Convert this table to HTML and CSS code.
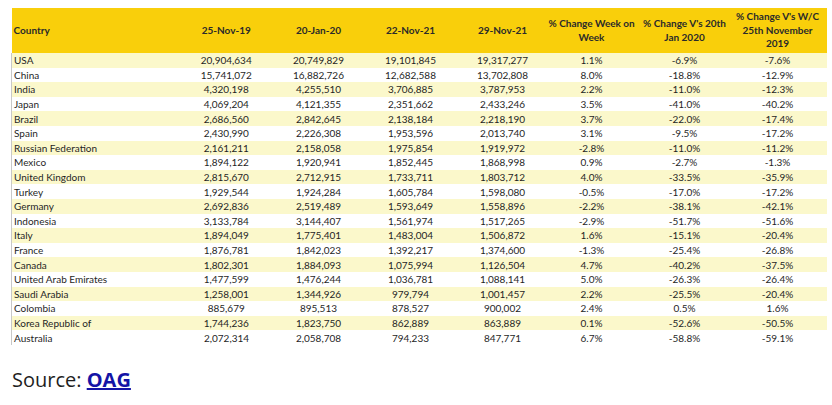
FILE: index.html
```html
<!DOCTYPE html>
<html>
<head>
<meta charset="utf-8">
<link rel="stylesheet" href="styles.css">
</head>
<body>
<table class="data">
  <colgroup>
    <col class="c-country"><col class="c-num"><col class="c-num"><col class="c-num"><col class="c-num"><col class="c-wk"><col class="c-jan"><col class="c-nov">
  </colgroup>
  <thead>
    <tr>
      <th class="left">Country</th>
      <th>25-Nov-19</th>
      <th>20-Jan-20</th>
      <th>22-Nov-21</th>
      <th>29-Nov-21</th>
      <th>% Change Week on<br>Week</th>
      <th>% Change V's 20th<br>Jan 2020</th>
      <th class="last">% Change V's W/C<br>25th November<br>2019</th>
    </tr>
  </thead>
  <tbody>
    <tr><td class="left">USA</td><td>20,904,634</td><td>20,749,829</td><td>19,101,845</td><td>19,317,277</td><td>1.1%</td><td>-6.9%</td><td class="last">-7.6%</td></tr>
    <tr><td class="left">China</td><td>15,741,072</td><td>16,882,726</td><td>12,682,588</td><td>13,702,808</td><td>8.0%</td><td>-18.8%</td><td class="last">-12.9%</td></tr>
    <tr><td class="left">India</td><td>4,320,198</td><td>4,255,510</td><td>3,706,885</td><td>3,787,953</td><td>2.2%</td><td>-11.0%</td><td class="last">-12.3%</td></tr>
    <tr><td class="left">Japan</td><td>4,069,204</td><td>4,121,355</td><td>2,351,662</td><td>2,433,246</td><td>3.5%</td><td>-41.0%</td><td class="last">-40.2%</td></tr>
    <tr><td class="left">Brazil</td><td>2,686,560</td><td>2,842,645</td><td>2,138,184</td><td>2,218,190</td><td>3.7%</td><td>-22.0%</td><td class="last">-17.4%</td></tr>
    <tr><td class="left">Spain</td><td>2,430,990</td><td>2,226,308</td><td>1,953,596</td><td>2,013,740</td><td>3.1%</td><td>-9.5%</td><td class="last">-17.2%</td></tr>
    <tr><td class="left">Russian Federation</td><td>2,161,211</td><td>2,158,058</td><td>1,975,854</td><td>1,919,972</td><td>-2.8%</td><td>-11.0%</td><td class="last">-11.2%</td></tr>
    <tr><td class="left">Mexico</td><td>1,894,122</td><td>1,920,941</td><td>1,852,445</td><td>1,868,998</td><td>0.9%</td><td>-2.7%</td><td class="last">-1.3%</td></tr>
    <tr><td class="left">United Kingdom</td><td>2,815,670</td><td>2,712,915</td><td>1,733,711</td><td>1,803,712</td><td>4.0%</td><td>-33.5%</td><td class="last">-35.9%</td></tr>
    <tr><td class="left">Turkey</td><td>1,929,544</td><td>1,924,284</td><td>1,605,784</td><td>1,598,080</td><td>-0.5%</td><td>-17.0%</td><td class="last">-17.2%</td></tr>
    <tr><td class="left">Germany</td><td>2,692,836</td><td>2,519,489</td><td>1,593,649</td><td>1,558,896</td><td>-2.2%</td><td>-38.1%</td><td class="last">-42.1%</td></tr>
    <tr><td class="left">Indonesia</td><td>3,133,784</td><td>3,144,407</td><td>1,561,974</td><td>1,517,265</td><td>-2.9%</td><td>-51.7%</td><td class="last">-51.6%</td></tr>
    <tr><td class="left">Italy</td><td>1,894,049</td><td>1,775,401</td><td>1,483,004</td><td>1,506,872</td><td>1.6%</td><td>-15.1%</td><td class="last">-20.4%</td></tr>
    <tr><td class="left">France</td><td>1,876,781</td><td>1,842,023</td><td>1,392,217</td><td>1,374,600</td><td>-1.3%</td><td>-25.4%</td><td class="last">-26.8%</td></tr>
    <tr><td class="left">Canada</td><td>1,802,301</td><td>1,884,093</td><td>1,075,994</td><td>1,126,504</td><td>4.7%</td><td>-40.2%</td><td class="last">-37.5%</td></tr>
    <tr><td class="left">United Arab Emirates</td><td>1,477,599</td><td>1,476,244</td><td>1,036,781</td><td>1,088,141</td><td>5.0%</td><td>-26.3%</td><td class="last">-26.4%</td></tr>
    <tr><td class="left">Saudi Arabia</td><td>1,258,001</td><td>1,344,926</td><td>979,794</td><td>1,001,457</td><td>2.2%</td><td>-25.5%</td><td class="last">-20.4%</td></tr>
    <tr><td class="left">Colombia</td><td>885,679</td><td>895,513</td><td>878,527</td><td>900,002</td><td>2.4%</td><td>0.5%</td><td class="last">1.6%</td></tr>
    <tr><td class="left">Korea Republic of</td><td>1,744,236</td><td>1,823,750</td><td>862,889</td><td>863,889</td><td>0.1%</td><td>-52.6%</td><td class="last">-50.5%</td></tr>
    <tr><td class="left">Australia</td><td>2,072,314</td><td>2,058,708</td><td>794,233</td><td>847,771</td><td>6.7%</td><td>-58.8%</td><td class="last">-59.1%</td></tr>
  </tbody>
</table>
<p class="source">Source: <a class="source-link" href="#">OAG</a></p>
</body>
</html>
```

FILE: styles.css
```css
html, body {
  margin: 0;
  padding: 0;
  background: #ffffff;
}

body {
  padding: 8px 0 0 11px;
  font-family: Lato, "Liberation Sans", sans-serif;
  color: #222222;
}

.data {
  border-collapse: collapse;
  table-layout: fixed;
  width: 815px;
  font-size: 10px;
}

.c-country { width: 169px; }
.c-num { width: 92px; }
.c-wk { width: 86px; }
.c-jan { width: 100px; }
.c-nov { width: 92px; }

.data thead tr {
  height: 45px;
  background: #f9cf0b;
}

.data th {
  font-weight: 700;
  font-size: 10px;
  line-height: 13.5px;
  text-align: center;
  vertical-align: middle;
  padding: 0;
  white-space: nowrap;
  color: #2a2a2a;
}

.data th.left {
  text-align: left;
  padding-left: 2px;
}

.data th.last,
.data td.last {
  padding-right: 6px;
}

.data tbody tr {
  height: 14.6px;
}

.data tbody tr:nth-child(odd) {
  background: #fbf8cb;
}

.data td {
  padding: 0;
  line-height: 14px;
  text-align: center;
  white-space: nowrap;
  color: #1f1f1f;
}

.data td.left {
  text-align: left;
  padding-left: 2px;
  border-left: 1px solid #c8c8c8;
}

.source {
  margin: 22px 0 0 1px;
  font-family: "Open Sans", "Liberation Sans", sans-serif;
  font-size: 20px;
  color: #1e1e1e;
  line-height: 26px;
}

.source-link {
  color: #1414a6;
  font-weight: 700;
  text-decoration: underline;
}
```
